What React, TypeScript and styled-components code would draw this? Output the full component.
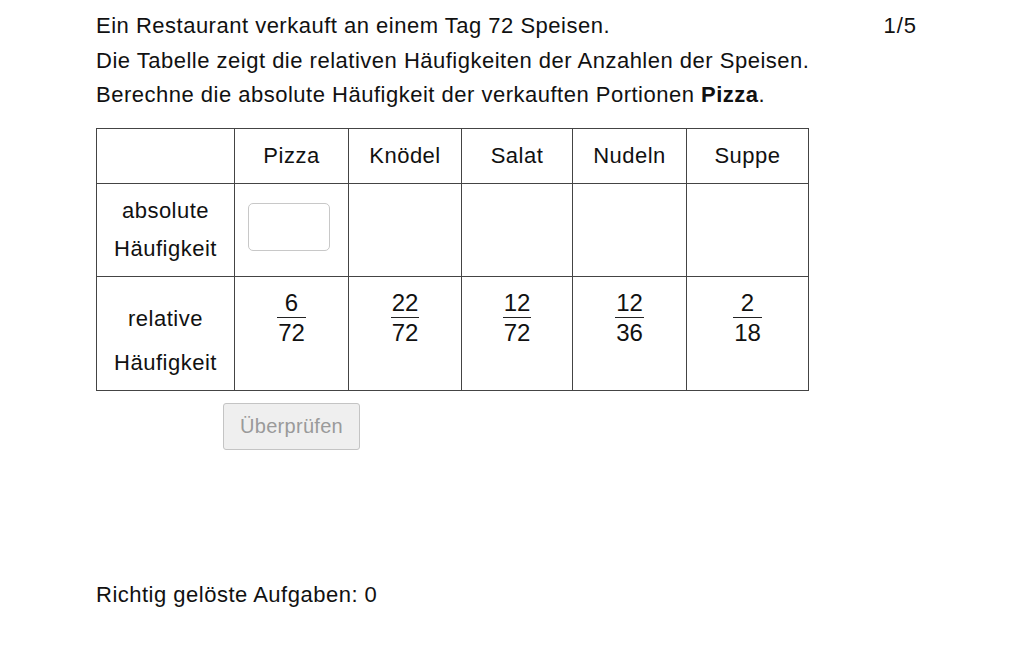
import React from "react";
import styled, { createGlobalStyle } from "styled-components";

const Global = createGlobalStyle`
  html, body { margin: 0; padding: 0; background: #fff; }
  body { font-family: "Liberation Sans", Arial, sans-serif; color: #111; }
`;

const Page = styled.div`
  width: 1032px;
  height: 645px;
  box-sizing: border-box;
  padding: 9px 0 0 96px;
  font-size: 22px;
  letter-spacing: 0.5px;
`;

const Column = styled.div`
  width: 821px;
  display: flex;
  flex-direction: column;
`;

const Prompt = styled.div`
  display: flex;
  justify-content: space-between;
  align-items: flex-start;
  line-height: 34.5px;
`;

const Lines = styled.div`
  display: flex;
  flex-direction: column;
`;

const Counter = styled.div`
  letter-spacing: 1px;
`;

const Table = styled.table`
  margin-top: 15px;
  border-collapse: collapse;
  table-layout: fixed;
  width: 712px;
  border: 1px solid #222;
`;

const Cell = styled.td<{ $w?: number; $h: number; $pt?: number; $lh?: number }>`
  border: 1px solid #444;
  padding: ${(p) => p.$pt ?? 0}px 0 0 0;
  width: ${(p) => (p.$w ? `${p.$w}px` : "auto")};
  height: ${(p) => p.$h}px;
  box-sizing: border-box;
  text-align: center;
  vertical-align: ${(p) => (p.$pt !== undefined ? "top" : "middle")};
  line-height: ${(p) => p.$lh ?? 24}px;
`;

const Input = styled.div`
  width: 82px;
  height: 48px;
  margin: -5px 0 0 13px;
  box-sizing: border-box;
  border: 1px solid #c8c8c8;
  border-radius: 5px;
`;

const Frac = styled.span`
  display: inline-flex;
  flex-direction: column;
  align-items: center;
  line-height: 24px;
  font-size: 24px;
  letter-spacing: 0;
`;

const Bar = styled.span`
  align-self: stretch;
  height: 1px;
  background: #222;
  margin: 2px -1px 3px;
`;

const Button = styled.button`
  margin: 12px 0 0 127px;
  width: 137px;
  height: 47px;
  align-self: flex-start;
  box-sizing: border-box;
  border: 1px solid #c4c4c4;
  border-radius: 3px;
  background: #efefef;
  color: #9a9a9a;
  font-family: "Liberation Sans", Arial, sans-serif;
  font-size: 20px;
  letter-spacing: 0.3px;
  padding: 0;
`;

const Footer = styled.div`
  margin-top: 131px;
  line-height: 28px;
`;

const dishes = ["Pizza", "Knödel", "Salat", "Nudeln", "Suppe"];
const widths = [114, 113, 111, 114, 122];
const fracs: [string, string][] = [
  ["6", "72"],
  ["22", "72"],
  ["12", "72"],
  ["12", "36"],
  ["2", "18"],
];

export default function App() {
  return (
    <>
      <Global />
      <Page>
        <Column>
          <Prompt>
            <Lines>
              <span>Ein Restaurant verkauft an einem Tag 72 Speisen.</span>
              <span>Die Tabelle zeigt die relativen Häufigkeiten der Anzahlen der Speisen.</span>
              <span>
                Berechne die absolute Häufigkeit der verkauften Portionen <b>Pizza</b>.
              </span>
            </Lines>
            <Counter>1/5</Counter>
          </Prompt>
          <Table>
            <tbody>
              <tr>
                <Cell $w={138} $h={55} />
                {dishes.map((d, i) => (
                  <Cell key={d} $w={widths[i]} $h={55}>
                    {d}
                  </Cell>
                ))}
              </tr>
              <tr>
                <Cell $h={93} $lh={38}>
                  absolute
                  <br />
                  Häufigkeit
                </Cell>
                <Cell $h={93}>
                  <Input />
                </Cell>
                {dishes.slice(1).map((d) => (
                  <Cell key={d} $h={93} />
                ))}
              </tr>
              <tr>
                <Cell $h={114} $pt={20} $lh={44}>
                  relative
                  <br />
                  Häufigkeit
                </Cell>
                {fracs.map(([n, d], i) => (
                  <Cell key={i} $h={114} $pt={14}>
                    <Frac>
                      <span>{n}</span>
                      <Bar />
                      <span>{d}</span>
                    </Frac>
                  </Cell>
                ))}
              </tr>
            </tbody>
          </Table>
          <Button disabled>Überprüfen</Button>
          <Footer>Richtig gelöste Aufgaben: 0</Footer>
        </Column>
      </Page>
    </>
  );
}
